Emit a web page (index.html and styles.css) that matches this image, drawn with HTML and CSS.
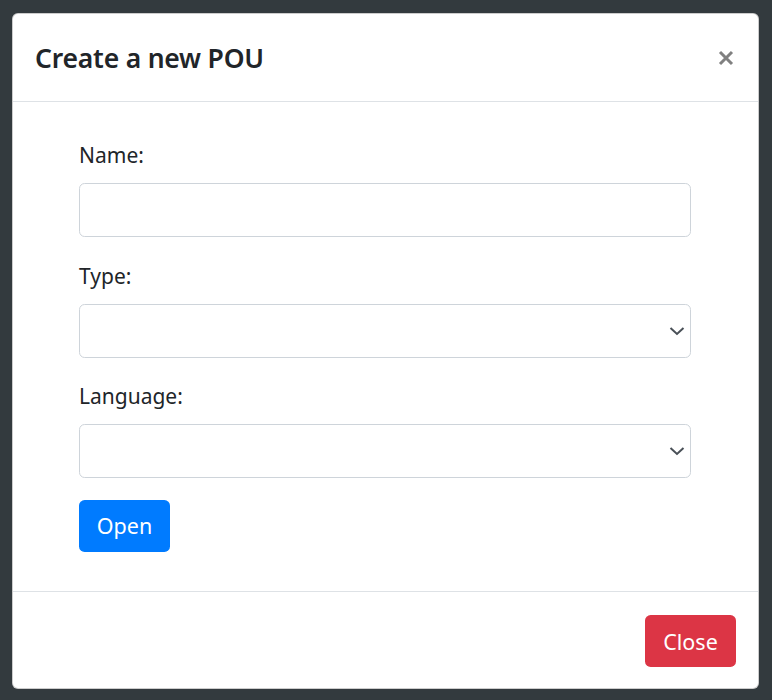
FILE: index.html
```html
<!DOCTYPE html>
<html lang="en">
<head>
<meta charset="utf-8">
<title>Create a new POU</title>
<link rel="stylesheet" href="styles.css">
</head>
<body>
<div class="modal">
  <div class="modal-header">
    <h5 class="modal-title">Create a new POU</h5>
    <button class="close" type="button" aria-label="Close">
      <svg width="16" height="16" viewBox="0 0 16 16"><path d="M2 2L14 14M14 2L2 14" stroke="#808080" stroke-width="3" fill="none"/></svg>
    </button>
  </div>
  <div class="modal-body">
    <form class="pou-form">
      <div class="form-group">
        <label class="form-label" for="name">Name:</label>
        <input class="form-control" id="name" type="text">
      </div>
      <div class="form-group">
        <label class="form-label" for="type">Type:</label>
        <div class="select-wrap">
          <select class="form-control" id="type"><option></option></select>
          <svg class="chevron" width="16" height="10" viewBox="0 0 16 10"><path d="M1.5 2L8 8L14.5 2" stroke="#495057" stroke-width="2" fill="none"/></svg>
        </div>
      </div>
      <div class="form-group">
        <label class="form-label" for="lang">Language:</label>
        <div class="select-wrap">
          <select class="form-control" id="lang"><option></option></select>
          <svg class="chevron" width="16" height="10" viewBox="0 0 16 10"><path d="M1.5 2L8 8L14.5 2" stroke="#495057" stroke-width="2" fill="none"/></svg>
        </div>
      </div>
      <button class="btn btn-primary" type="button">Open</button>
    </form>
  </div>
  <div class="modal-footer">
    <button class="btn btn-danger" type="button">Close</button>
  </div>
</div>
</body>
</html>
```
FILE: styles.css
```css
html, body {
  margin: 0;
  padding: 0;
}
body {
  background: #333a3e;
  font-family: "Noto Sans", "Open Sans", sans-serif;
  color: #212529;
  font-size: 21px;
  line-height: 1.5;
  padding: 13px 13px 11px 12px;
}
.modal {
  box-sizing: border-box;
  width: 747px;
  height: 676px;
  background: #fff;
  border: 1px solid rgba(0, 0, 0, 0.2);
  border-radius: 6px;
  display: flex;
  flex-direction: column;
}
.modal-header {
  box-sizing: border-box;
  height: 88px;
  padding: 0 22px;
  border-bottom: 1px solid #dee2e6;
  display: flex;
  align-items: center;
  justify-content: space-between;
}
.modal-title {
  margin: 0;
  font-size: 26.5px;
  font-weight: 600;
  line-height: 42px;
  letter-spacing: -0.2px;
}
.close {
  background: none;
  border: 0;
  padding: 0;
  margin-right: 2px;
  width: 16px;
  height: 16px;
  display: flex;
}
.modal-body {
  flex: 1;
  padding: 36px 67px 0 66px;
}
.pou-form {
  display: flex;
  flex-direction: column;
  align-items: flex-start;
}
.form-group {
  width: 100%;
  margin-bottom: 21.5px;
}
.form-label {
  display: block;
  margin-bottom: 11px;
  line-height: 34px;
}
.select-wrap {
  position: relative;
}
.chevron {
  position: absolute;
  right: 6px;
  top: 22px;
  pointer-events: none;
}
.form-control {
  box-sizing: border-box;
  display: block;
  width: 100%;
  height: 54px;
  border: 1px solid #ced4da;
  border-radius: 5.6px;
  background: #fff;
  font: inherit;
  color: #495057;
  padding: 0 16.8px;
}
select.form-control {
  appearance: none;
  -webkit-appearance: none;
  padding-right: 30px;
}
.btn {
  box-sizing: border-box;
  height: 52px;
  font: inherit;
  font-size: 21.5px;
  line-height: 33px;
  padding: 8px 16.8px;
  border: 1px solid transparent;
  border-radius: 5.6px;
  color: #fff;
}
.btn-primary {
  background: #007bff;
  width: 91px;
}
.btn-danger {
  background: #dc3545;
  width: 91px;
}
.modal-footer {
  box-sizing: border-box;
  border-top: 1px solid #dee2e6;
  padding: 23px 22px 21px;
  display: flex;
  justify-content: flex-end;
}
```
